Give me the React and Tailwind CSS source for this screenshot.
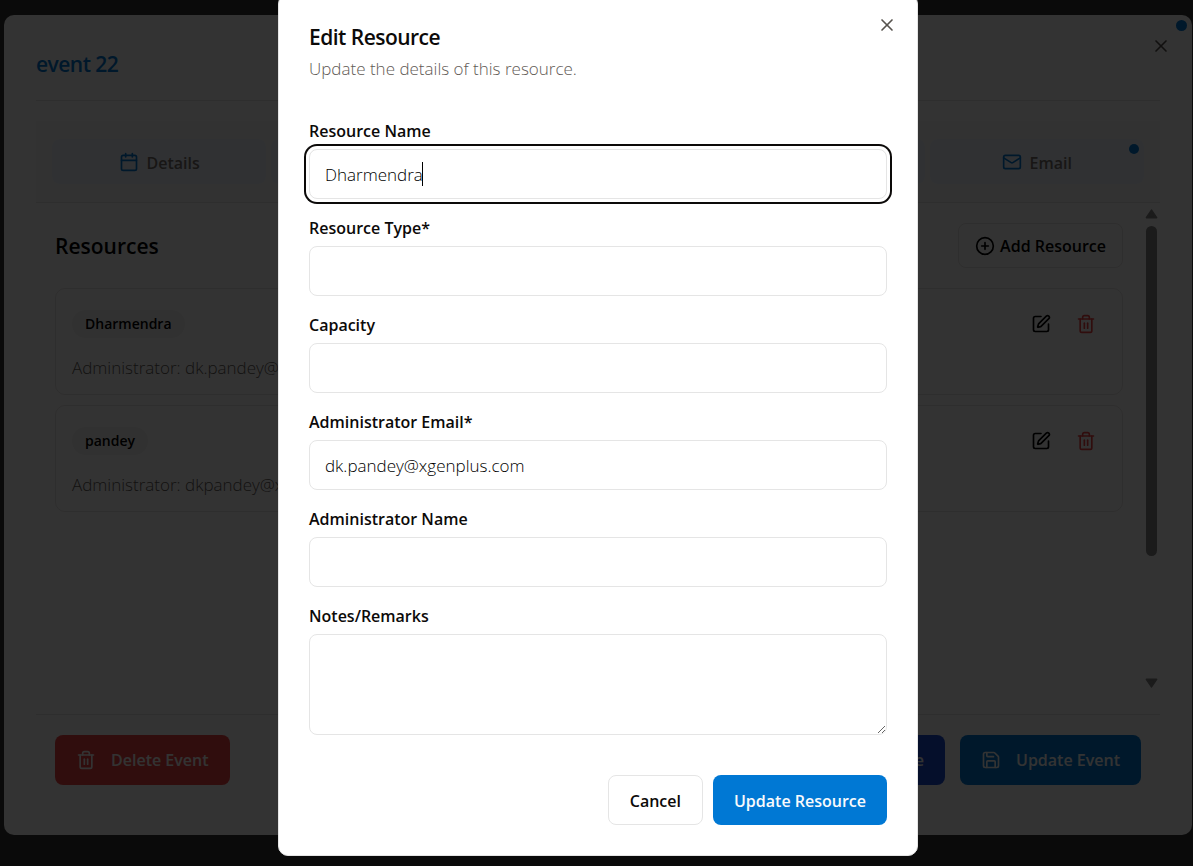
import { Calendar, CirclePlus, Mail, Save, SquarePen, Trash2, X } from "lucide-react";

const resources = [
  { name: "Dharmendra", admin: "dk.pandey@xgenplus.com" },
  { name: "pandey", admin: "dkpandey@xgenplus.com" },
];

function ResourceCard({ name, admin }) {
  return (
    <li className="flex items-start justify-between rounded-[10px] border border-[#e7e5e4] px-4 pt-[21px] pb-3">
      <div className="flex flex-col items-start gap-4">
        <span className="rounded-full bg-[#f5f5f4] px-[13px] py-1 text-[14px] leading-5 font-semibold text-black">{name}</span>
        <p className="text-[17px] leading-7 font-light text-[#5f5a55]">Administrator: {admin}</p>
      </div>
      <div className="flex gap-[5px]">
        <button type="button" aria-label={`Edit ${name}`} className="flex h-7 w-10 items-center justify-center text-black">
          <SquarePen size={20} />
        </button>
        <button type="button" aria-label={`Delete ${name}`} className="flex h-7 w-10 items-center justify-center text-[#ef4444]">
          <Trash2 size={20} />
        </button>
      </div>
    </li>
  );
}

function ScrollTrack() {
  return (
    <div className="mr-px flex w-4 flex-col items-center pt-[6px] pb-[6px] text-[#858585]" aria-hidden="true">
      <svg width="13" height="10" viewBox="0 0 13 10">
        <path d="M6.5 1.2 11.6 8.6H1.4Z" fill="currentColor" stroke="currentColor" strokeWidth="1.6" strokeLinejoin="round" />
      </svg>
      <div className="mt-[7px] flex w-[11px] flex-1 flex-col">
        <div className="h-[73%] rounded-full bg-[#858585]" />
      </div>
      <svg width="13" height="10" viewBox="0 0 13 10">
        <path d="M6.5 8.8 11.6 1.4H1.4Z" fill="currentColor" stroke="currentColor" strokeWidth="1.6" strokeLinejoin="round" />
      </svg>
    </div>
  );
}

function EventDialog() {
  return (
    <section className="relative flex flex-1 flex-col rounded-[10px] bg-white px-8 pt-[33px]">
      <span className="absolute top-[5px] right-[5px] size-[11px] rounded-full bg-[#0078d4]" />
      <button type="button" aria-label="Close event" className="absolute top-[21px] right-[21px] text-[#57534e]">
        <X size={20} />
      </button>
      <header className="border-b border-[#e7e5e4] pb-5">
        <h1 className="text-[21px] leading-8 font-semibold tracking-tight text-[#0078d4]">event 22</h1>
      </header>
      <nav className="mt-5 grid grid-cols-5 gap-[5px] border-b border-[#e7e5e4] bg-[#fafafa] px-4 py-[18px]">
        <button type="button" className="flex h-[45px] items-center justify-center gap-2 rounded-lg bg-[#eff6ff] pt-[3px] text-[16px] font-semibold text-[#78716c]">
          <Calendar size={20} className="mb-[3px] text-[#0078d4]" />
          Details
        </button>
        <span className="rounded-lg bg-[#eff6ff]" />
        <span className="rounded-lg bg-[#eff6ff]" />
        <span className="rounded-lg bg-[#eff6ff]" />
        <button type="button" className="relative flex h-[45px] items-center justify-center gap-2 rounded-lg bg-[#eff6ff] pt-[3px] text-[16px] font-semibold text-[#78716c]">
          <Mail size={20} className="mb-[3px] text-[#0078d4]" />
          Email
          <span className="absolute top-[5px] right-[5px] size-[10px] rounded-full bg-[#0078d4]" />
        </button>
      </nav>
      <div className="flex flex-1">
        <main className="flex-1 py-5 pr-5 pl-[19px]">
          <div className="mb-5 flex items-center justify-between">
            <h2 className="text-[21px] leading-8 font-semibold text-black">Resources</h2>
            <button type="button" className="flex h-[45px] items-center gap-[5px] rounded-lg border border-[#e7e5e4] px-4 text-[16px] font-semibold text-black">
              <CirclePlus size={20} />
              Add Resource
            </button>
          </div>
          <ul className="flex flex-col gap-[10px]">
            {resources.map((r) => (
              <ResourceCard key={r.name} {...r} />
            ))}
          </ul>
        </main>
        <ScrollTrack />
      </div>
      <footer className="mt-5 flex border-t border-[#e7e5e4] px-[19px] pt-5 pb-[50px] text-[16px] font-semibold text-white">
        <button type="button" className="flex h-[50px] items-center gap-[15px] rounded-lg bg-[#ef4444] px-[21px]">
          <Trash2 size={20} />
          Delete Event
        </button>
        <button type="button" className="ml-auto flex h-[50px] items-center rounded-lg bg-[#1d4ed8] px-[21px]">
          Duplicate
        </button>
        <button type="button" className="ml-[15px] flex h-[50px] items-center gap-[15px] rounded-lg bg-[#0078d4] px-[21px]">
          <Save size={20} />
          Update Event
        </button>
      </footer>
    </section>
  );
}

const inputClass = "block h-[50px] w-full rounded-lg border border-[#e5e5e5] bg-white px-[15px] text-[17px] font-light text-black outline-none";

function Field({ id, label, children }) {
  return (
    <div className="flex flex-col gap-2">
      <label htmlFor={id} className="text-[16px] leading-[19px] font-semibold text-[#0c0a09]">
        {label}
      </label>
      {children}
    </div>
  );
}

function EditResourceDialog() {
  return (
    <form
      role="dialog"
      aria-labelledby="edit-title"
      onSubmit={(e) => e.preventDefault()}
      className="relative w-full max-w-[640px] rounded-[10px] border border-[#e5e5e5] bg-white p-[30px]"
    >
      <button type="button" aria-label="Close" className="absolute top-5 right-5 text-[#57534e]">
        <X size={20} />
      </button>
      <h2 id="edit-title" className="text-[21px] leading-[24px] font-semibold tracking-tight text-[#0c0a09]">
        Edit Resource
      </h2>
      <p className="mt-[7px] text-[17px] leading-[26px] font-light text-[#5f5a55]">Update the details of this resource.</p>
      <div className="mt-10 flex flex-col gap-5">
        <Field id="name" label="Resource Name">
          <div className="relative">
            <input id="name" defaultValue="Dharmendra" className={`${inputClass} ring-2 ring-[#0c0a09] ring-offset-[3px]`} />
            <span className="absolute top-[13px] left-[113px] h-6 w-px bg-black" aria-hidden="true" />
          </div>
        </Field>
        <Field id="type" label="Resource Type*">
          <input id="type" className={inputClass} />
        </Field>
        <Field id="capacity" label="Capacity">
          <input id="capacity" className={inputClass} />
        </Field>
        <Field id="email" label="Administrator Email*">
          <input id="email" type="email" defaultValue="dk.pandey@xgenplus.com" className={inputClass} />
        </Field>
        <Field id="admin" label="Administrator Name">
          <input id="admin" className={inputClass} />
        </Field>
        <Field id="notes" label="Notes/Remarks">
          <textarea id="notes" className="block h-[101px] w-full resize-y rounded-lg border border-[#e5e5e5] bg-white px-[15px] py-[10px] text-[17px] font-light outline-none" />
        </Field>
      </div>
      <div className="mt-10 flex justify-end gap-[10px] text-[16px] font-semibold">
        <button type="button" className="h-[50px] rounded-lg border border-[#e5e5e5] bg-white px-[21px] pt-[2px] text-[#0c0a09]">
          Cancel
        </button>
        <button type="submit" className="h-[50px] rounded-lg bg-[#0078d4] px-[21px] pt-[2px] text-[#f8fafc]">
          Update Resource
        </button>
      </div>
    </form>
  );
}

export default function App() {
  return (
    <div className="relative flex min-h-screen flex-col bg-[#333333] pt-[15px] pr-px pb-[31px] pl-1 font-['Open_Sans','Noto_Sans',sans-serif]">
      <EventDialog />
      <div className="fixed inset-0 flex items-end justify-center overflow-hidden bg-black/80 pb-[10px] pl-[3px]">
        <EditResourceDialog />
      </div>
    </div>
  );
}
